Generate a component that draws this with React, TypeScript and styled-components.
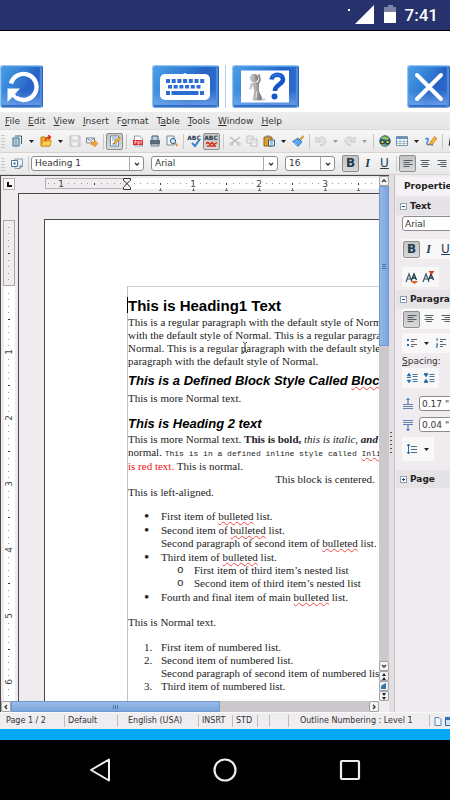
import React from "react";
import styled, { createGlobalStyle, css } from "styled-components";

const ui = '"DejaVu Sans", Verdana, sans-serif';
const INCH = 66;

const Global = createGlobalStyle`
  *, *::before, *::after { box-sizing: border-box; }
  body { margin: 0; background: #000; font-family: ${ui}; font-size: 9px; color: #333; }
  button { border: 0; padding: 0; margin: 0; background: none; font: inherit; color: inherit; }
  svg { display: block; flex: none; }
  ul, ol, p, h1, h2, h3 { margin: 0; padding: 0; list-style: none; font-weight: normal; }
`;

const Screen = styled.div`
  display: flex;
  flex-direction: column;
  min-height: 100vh;
  overflow: hidden;
`;

/* ---------- device bars ---------- */

const DeviceStatus = styled.header`
  display: flex;
  align-items: center;
  justify-content: flex-end;
  height: 31px;
  padding-right: 12px;
  background: #27326c;
  border-bottom: 1px solid #000;
`;

const Clock = styled.time`
  margin-left: 8px;
  font: 500 17px/30px Roboto, sans-serif;
  color: #fff;
`;

const RemoteBar = styled.div`
  display: flex;
  justify-content: space-between;
  padding: 34px 0 4px;
  background: #fff;
`;

const ButtonPair = styled.div`
  display: flex;
  gap: 6px;
`;

const PairDivider = styled.span`
  width: 1px;
  background: #b4cdee;
`;

const GlossButton = styled.button<{ $wide?: boolean }>`
  display: flex;
  align-items: center;
  justify-content: center;
  width: ${(p) => (p.$wide ? 67 : 43)}px;
  height: 43px;
  border: 1px solid #9cc4f0;
  border-right-color: #2b62b4;
  border-bottom-color: #7fa8de;
  border-radius: 3px;
  box-shadow: inset 1px 1px 0 #4f9fe6, inset -2px 0 1px #4d8ee0, inset 0 -2px 1px #2f6cc4;
  background:
    linear-gradient(transparent 60%, #8abcf6aa 100%),
    linear-gradient(120deg, #49a0e6 0%, #2f78d2 45%, #2862c6 60%, #3370d0 100%);
`;

const NavBar = styled.nav`
  display: flex;
  justify-content: center;
  height: 60px;
  background: #000;
  border: 0;
`;

const NavButton = styled.button`
  display: flex;
  align-items: center;
  justify-content: center;
  width: 125px;
`;

const BlueStrip = styled.div`
  height: 11px;
  background: #03a9f4;
`;

/* ---------- office bars ---------- */

const MenuBar = styled.nav`
  display: flex;
  align-items: center;
  gap: 8px;
  height: 18px;
  padding-left: 5px;
  background: linear-gradient(#efeeef, #e6e5e6);
  border-bottom: 1px solid #dcdbdc;
`;

const MenuButton = styled.button`
  line-height: 14px;
  white-space: nowrap;
`;

const Accel = styled.span`
  text-decoration: underline;
  text-underline-offset: 1px;
`;

const ToolBar = styled.div<{ $tall?: boolean }>`
  display: flex;
  align-items: center;
  height: ${(p) => (p.$tall ? 23 : 22)}px;
  overflow: hidden;
  background: linear-gradient(#f7f6f7, #e9e8e9);
  border-bottom: 1px solid #d6d5d6;
`;

const Handle = styled.span`
  flex: 0 0 4px;
  height: 14px;
  margin: 0 3px 0 1px;
  background: radial-gradient(circle, #c8c8c8 1px, transparent 1px) 0 0 / 2px 3px;
`;

const pressed = css`
  background: linear-gradient(#c4c4c4, #d8d8d8);
  border: 1px solid #8e8e8e;
  border-radius: 2px;
`;

const Tool = styled.button<{ $on?: boolean; $dim?: boolean }>`
  display: flex;
  flex: 0 0 17px;
  align-items: center;
  justify-content: center;
  height: 17px;
  opacity: ${(p) => (p.$dim ? 0.4 : 1)};
  ${(p) => p.$on && pressed}
`;

const DropButton = styled.button<{ $dim?: boolean }>`
  display: flex;
  flex: 0 0 12px;
  align-items: center;
  justify-content: center;
  height: 17px;
  opacity: ${(p) => (p.$dim ? 0.4 : 1)};
`;

const Sep = styled.span`
  flex: 0 0 6px;
  height: 15px;
  background: linear-gradient(#c9c8c9, #c9c8c9) center / 1px 100% no-repeat;
`;

const ComboBox = styled.label<{ $w: number }>`
  display: flex;
  flex: 0 0 ${(p) => p.$w}px;
  align-items: center;
  height: 15px;
  margin-right: 7px;
  border: 1px solid #8c8c8c;
  border-radius: 3px;
  background: #fff;
`;

const ComboSelect = styled.select`
  flex: 1;
  min-width: 0;
  height: 13px;
  padding: 0 0 0 3px;
  border: 0;
  appearance: none;
  background: none;
  font: 9px/13px ${ui};
  color: #333;
`;

const ComboArrow = styled.span`
  display: flex;
  align-items: center;
  justify-content: center;
  width: 14px;
  height: 13px;
  border-left: 1px solid #a8a8a8;
`;

const Letter = styled.span<{ $kind: "b" | "i" | "u" }>`
  font: ${(p) => (p.$kind === "b" ? "bold" : p.$kind === "i" ? "italic bold" : "normal")} 12px/15px
    ${(p) => (p.$kind === "i" ? '"Liberation Serif", serif' : ui)};
  color: #1e3c50;
  text-decoration: ${(p) => (p.$kind === "u" ? "underline" : "none")};
`;

/* ---------- work area ---------- */

const WorkArea = styled.main`
  display: flex;
  flex: 1;
  background: #efebee;
`;

const DocumentPane = styled.section`
  display: grid;
  flex: 1;
  min-width: 0;
  grid-template: 17px 1fr 11px / 17px minmax(0, 1fr) 10px;
  border-top: 1px solid #4a4a4a;
  border-left: 1px solid #4a4a4a;
`;

const TabCorner = styled.button`
  display: flex;
  align-items: center;
  justify-content: center;
  width: 12px;
  height: 12px;
  margin: 2px 0 0 2px;
  border: 1px solid #b4b2b4;
  background: #f8f7f8;
`;

const TopRuler = styled.div`
  overflow: hidden;
  padding: 1px 0 0 27px;
`;

const SideRuler = styled.div`
  min-height: 0;
  padding: 27px 0 0 2px;
  overflow: hidden;
`;

const Canvas = styled.div`
  display: flex;
  overflow: hidden;
  border-top: 1px solid #4a4a4a;
  border-left: 1px solid #4a4a4a;
`;

const Sheet = styled.article`
  flex: 0 0 560px;
  margin: 25px 0 0 25px;
  padding: 66px 82px 0;
  border-top: 1px solid #4a4a4a;
  border-left: 1px solid #4a4a4a;
  background: #fff;
  color: #222;
`;

const TextFrame = styled.div`
  position: relative;
  height: 100%;
  border-top: 1px solid #d0d0d0;
  border-left: 1px solid #c4c4c4;
  font: 11px/13px "Liberation Serif", serif;
  white-space: nowrap;
`;

const Caret = styled.span`
  position: absolute;
  left: -1px;
  top: 10px;
  width: 1px;
  height: 16px;
  background: #000;
`;

const HeadingOne = styled.h1`
  padding: 10px 0 2px;
  font: bold 15px/17px "Liberation Sans", sans-serif;
  color: #000;
`;

const HeadingTwo = styled.h2<{ $gap: number }>`
  padding-top: ${(p) => p.$gap}px;
  font: italic bold 13px/15px "Liberation Sans", sans-serif;
  color: #000;
`;

const Para = styled.p<{ $gap?: number; $center?: boolean }>`
  position: relative;
  margin-top: ${(p) => p.$gap ?? 0}px;
  text-align: ${(p) => (p.$center ? "center" : "left")};
`;

const Pointer = styled.span`
  position: absolute;
  left: 114px;
  top: 26px;
`;

const Code = styled.code`
  font: 8px/13px "Liberation Mono", monospace;
`;

const Red = styled.span`
  color: #f01414;
`;

const Misspelt = styled.span`
  text-decoration: underline wavy #f04848 1px;
  text-decoration-skip-ink: none;
  text-underline-offset: 1px;
`;

const listBase = css`
  display: flex;
  flex-direction: column;
  padding-left: 16px;
`;

const Bullets = styled.ul`
  ${listBase}
  gap: 1px;
  margin-top: 11px;
`;

const Nested = styled.ul`
  ${listBase}
`;

const Numbers = styled.ol`
  ${listBase}
  margin-top: 12px;
`;

const Item = styled.li`
  display: grid;
  grid-template-columns: 17px 1fr;
`;

const Marker = styled.span<{ $kind?: "dot" | "ring" }>`
  height: 13px;
  ${(p) => p.$kind === "ring" && 'font-family: "Liberation Mono", monospace;'}
  ${(p) => p.$kind === "dot" && "font-size: 15px;"}
`;

/* ---------- scroll bars ---------- */

const VScroll = styled.div`
  display: flex;
  flex-direction: column;
  grid-row: 1 / 3;
  grid-column: 3;
  background: #cbc9cb;
`;

const HScroll = styled.div`
  display: flex;
  grid-column: 1 / 3;
  background: #cbc9cb;
`;

const ScrollButton = styled.button`
  display: flex;
  flex: 0 0 10px;
  align-items: center;
  justify-content: center;
  min-width: 10px;
  min-height: 10px;
  border: 1px solid #a4a2a4;
  border-radius: 2px;
  background: #f4f3f4;
`;

const VThumb = styled.div`
  display: flex;
  flex: 0 0 160px;
  align-items: center;
  justify-content: center;
  background: linear-gradient(90deg, #94b8e6, #7ba5dc);
  border: 1px solid #6f98cf;
`;

const HThumb = styled.div`
  display: flex;
  flex: 0 1 209px;
  align-items: center;
  justify-content: center;
  background: linear-gradient(#98bbe8, #7ba5dc);
  border: 1px solid #6f98cf;
`;

const Spacer = styled.div`
  flex: 1;
`;

/* ---------- sidebar ---------- */

const Splitter = styled.div`
  display: flex;
  flex: 0 0 6px;
  align-items: center;
  justify-content: center;
  padding-right: 1px;
  background: #e2dfe2;
  border-right: 1px solid #c4c2c4;
`;

const Grip = styled.span`
  width: 2px;
  height: 24px;
  background: repeating-linear-gradient(#555 0 1px, transparent 1px 4px);
`;

const Sidebar = styled.aside`
  flex: 0 0 55px;
  overflow: hidden;
  padding: 2px 0 0 1px;
  white-space: nowrap;
`;

const SideTitle = styled.h2`
  height: 18px;
  padding-left: 8px;
  font: bold 9px/18px ${ui};
  color: #222;
  background: #f5f3f5;
`;

const SectionTitle = styled.h3`
  display: flex;
  align-items: center;
  gap: 3px;
  height: 18px;
  padding-left: 4px;
  margin-top: 2px;
  font: bold 9px/18px ${ui};
  color: #222;
  background: #e5e3e5;
`;

const SectionBody = styled.div<{ $gap: number; $top?: number; $bottom?: number }>`
  display: flex;
  flex-direction: column;
  align-items: flex-start;
  gap: ${(p) => p.$gap}px;
  padding: ${(p) => p.$top ?? 1}px 0 ${(p) => p.$bottom ?? 1}px 6px;
`;

const ToolPanel = styled.div<{ $tall?: boolean }>`
  display: flex;
  align-items: center;
  height: ${(p) => (p.$tall ? 24 : 20)}px;
  padding: 0 2px 0 1px;
  background: #f9f8f9;
`;

const SideField = styled.input`
  width: 90px;
  height: 15px;
  padding: 0 2px;
  border: 1px solid #8c8c8c;
  border-radius: 3px;
  background: #fff;
  font: 9px/13px ${ui};
  color: #333;
`;

const SideLabel = styled.span`
  font: 9px/12px ${ui};
`;

const SpacingRow = styled.label`
  display: flex;
  align-items: center;
  gap: 5px;
  height: 17px;
`;

/* ---------- status ---------- */

const StatusBar = styled.footer`
  display: flex;
  align-items: center;
  height: 17px;
  overflow: hidden;
  background: #f0edf0;
  border-top: 1px solid #fbfafb;
  font: 8px/16px ${ui};
  white-space: nowrap;
`;

const Field = styled.span<{ $w: number; $pad: number }>`
  flex: 0 0 ${(p) => p.$w}px;
  height: 12px;
  padding-left: ${(p) => p.$pad}px;
  line-height: 12px;
  border-right: 1px solid #bcbabc;
`;

const StatusIcons = styled.span`
  display: flex;
  gap: 3px;
  padding-left: 4px;
`;

/* ---------- drawings ---------- */

const Ico = ({ children, s = 12 }: { children: React.ReactNode; s?: number }) => (
  <svg width={s} height={s} viewBox="0 0 12 12" fill="none" aria-hidden="true">
    {children}
  </svg>
);

const Down = () => (
  <svg width="5" height="3" viewBox="0 0 5 3" aria-hidden="true">
    <path d="M0 0h5L2.500 3z" fill="#222" />
  </svg>
);

const Chevron = ({ dir = 0 }: { dir?: number }) => (
  <svg width="6" height="6" viewBox="0 0 6 6" fill="none" aria-hidden="true">
    <path d="M1 2l2 2 2-2" stroke="#333" strokeWidth="1.3" transform={`rotate(${dir} 3 3)`} />
  </svg>
);

const icons = {
  newDoc: (
    <Ico>
      <path d="M4 1h6.500v8" stroke="#34607e" />
      <path d="M2 3h6v8H2z" fill="#dce8f0" stroke="#34607e" />
      <path d="M3.500 5h3M3.500 7h3M3.500 9h3" stroke="#4c7c9c" />
    </Ico>
  ),
  open: (
    <Ico>
      <path d="M1 2h4l1 1h4v8H1z" fill="#f0a828" stroke="#c87c14" />
      <path d="M1 11l2-5h8.500l-2 5z" fill="#fcd050" stroke="#d08c18" strokeWidth=".8" />
      <path d="M5.500 6c0-3 2-4 4-4M8 0l2.500 2L8 4" stroke="#d83018" strokeWidth="1.300" />
    </Ico>
  ),
  save: (
    <Ico>
      <path d="M1 1h10v10H1z" fill="#c8c8c8" stroke="#777" />
      <path d="M3 1h6v4H3zM3 7h6v4H3z" fill="#fff" stroke="#999" strokeWidth=".6" />
    </Ico>
  ),
  mail: (
    <Ico>
      <path d="M.5 3h8v5h-8z" fill="#eef2f6" stroke="#7f8c98" />
      <path d="M.5 3l4 3 4-3" stroke="#7f8c98" />
      <path d="M5.500 7h3V5l3.500 3.500L8.500 12v-2h-3z" fill="#f4a830" stroke="#b8700c" strokeWidth=".5" />
    </Ico>
  ),
  edit: (
    <Ico>
      <path d="M1.500 1h8v10h-8z" fill="#fff" stroke="#6c8aa0" />
      <path d="M3 3h5M3 5h4M3 9h5" stroke="#6c9ac0" />
      <path d="M4.500 9l1-2.500L10 2l1.500 1.500L7 8z" fill="#f4b830" stroke="#a06c10" strokeWidth=".6" />
    </Ico>
  ),
  pdf: (
    <Ico>
      <path d="M2.500 1h5l3 3v7h-8z" fill="#fff" stroke="#8aa0b0" />
      <path d="M1 5h10v5H1z" fill="#dc2c2c" />
      <path d="M3 9V6h1v2M6 6v3h1V6M9 9V6h1" stroke="#fff" strokeWidth=".7" />
    </Ico>
  ),
  print: (
    <Ico>
      <path d="M3 1h6v5H3z" fill="#b4d2ea" stroke="#44586a" />
      <path d="M1 5h10v4H1z" fill="#5a6c7c" />
      <path d="M2 9h8v2H2z" fill="#dfe6ea" stroke="#44586a" strokeWidth=".7" />
    </Ico>
  ),
  preview: (
    <Ico>
      <path d="M1 1h7v9H1z" fill="#f4f8fb" stroke="#6c8aa0" />
      <circle cx="7" cy="6" r="2.600" fill="#cfe6f6" stroke="#34607e" />
      <path d="M9 8l2.500 3" stroke="#d89020" strokeWidth="1.600" />
    </Ico>
  ),
  cut: (
    <Ico>
      <path d="M1 2l8 6M11 2L3 8" stroke="#666" strokeWidth="1.200" />
      <circle cx="2.200" cy="9" r="1.400" stroke="#666" />
      <circle cx="9.800" cy="9" r="1.400" stroke="#666" />
    </Ico>
  ),
  copy: (
    <Ico>
      <path d="M1 1h6v7H1z" fill="#fff" stroke="#777" />
      <path d="M5 4h6v7H5z" fill="#fff" stroke="#777" />
      <path d="M2 3h4M2 5h2M6 6h4M6 8h4" stroke="#888" strokeWidth=".7" />
    </Ico>
  ),
  paste: (
    <Ico>
      <path d="M1 2h8v9H1z" fill="#e0a030" stroke="#94621c" />
      <path d="M3 .500h4v2H3z" fill="#8a8a8a" />
      <path d="M5.500 5h6v6h-6z" fill="#eaf2fa" stroke="#34607e" />
      <path d="M7 7h3M7 9h3" stroke="#34607e" strokeWidth=".7" />
    </Ico>
  ),
  brush: (
    <Ico>
      <path d="M7 5l3.500-4.500 1.300 1.200L8.500 6z" fill="#e8b040" stroke="#a06c10" strokeWidth=".5" />
      <path d="M.5 6.500L6 3l4 4-4 4.500z" fill="#4a9cec" stroke="#1d5c9e" strokeWidth=".6" />
      <path d="M2 7l3 3M4 5.500l3 3" stroke="#b4d8f8" strokeWidth=".7" />
    </Ico>
  ),
  undo: (
    <Ico>
      <path d="M1 2v5h5L4.200 5.200C6 3.800 8.500 4.500 8.500 6.500 8.500 8 7 9.500 5 10.500 8.500 10.500 11 8.500 11 5.800 11 2 6 .8 3 3.800z" fill="#ddd" stroke="#666" strokeWidth=".7" />
    </Ico>
  ),
  redo: (
    <Ico>
      <path d="M11 2v5H6l1.800-1.800C6 3.800 3.500 4.500 3.500 6.500 3.500 8 5 9.500 7 10.500 3.500 10.500 1 8.500 1 5.800 1 2 6 .8 9 3.800z" fill="#ddd" stroke="#666" strokeWidth=".7" />
    </Ico>
  ),
  globe: (
    <Ico>
      <circle cx="6" cy="6" r="5.300" fill="#3c7cb0" stroke="#22506c" strokeWidth=".8" />
      <path d="M2 3c2-2 5-2 8 0L8 5 5 4zM2 9l3 2 4-1" fill="#a4c83c" />
      <path d="M2 5.500h3v3H2zM7 5.500h3v3H7zM5 7h2" fill="#e8d85c" stroke="#263c20" strokeWidth=".9" />
    </Ico>
  ),
  table: (
    <Ico>
      <path d="M.5 1.500h11v9H.5z" fill="#fff" stroke="#7894a8" />
      <path d="M1 2h10v2H1z" fill="#5c92c4" />
      <path d="M1 6.500h10M1 8.500h10M4 2v9M8 2v9" stroke="#8aa2b4" strokeWidth=".7" />
    </Ico>
  ),
  draw: (
    <Ico>
      <path d="M.5 4.500C1 3 4 3 3 5.500S1 9 3 9.500s4-1 5 1" stroke="#3484d4" strokeWidth="1.400" />
      <path d="M5 7.500L9.500 1.500 12 3.500 7.500 9 4.500 10z" fill="#f4b830" stroke="#c05820" strokeWidth=".6" />
    </Ico>
  ),
  find: (
    <Ico>
      <path d="M2 2h3v3h2V2h3l1.500 8.500H7V7H5v3.500H.5z" fill="#333" />
    </Ico>
  ),
  styles: (
    <Ico>
      <path d="M4 1h7.500v7L9 10.500H4z" fill="#e6f0f6" stroke="#8aa2b4" />
      <path d="M.500 2.500h6v6h-6z" fill="#fff" stroke="#4c7894" />
      <path d="M2.500 4.500h2v2h-2z" fill="#34607e" />
      <path d="M9 10.500V8h2.500" stroke="#34607e" strokeWidth=".8" />
    </Ico>
  ),
  left: (
    <Ico>
      <path d="M1.500 2.500h9M1.500 4.500h6M1.500 6.500h9M1.500 8.500h6" stroke="#555f66" />
    </Ico>
  ),
  center: (
    <Ico>
      <path d="M1.500 2.500h9M3 4.500h6M1.500 6.500h9M3 8.500h6" stroke="#555f66" />
    </Ico>
  ),
  right: (
    <Ico>
      <path d="M1.500 2.500h9M4.500 4.500h6M1.500 6.500h9M4.500 8.500h6" stroke="#555f66" />
    </Ico>
  ),
  bullets: (
    <Ico>
      <path d="M1 2h2v2H1zM1 7h2v2H1z" fill="#2c6ca4" />
      <path d="M5 2.500h6M5 4.500h3M5 7.500h6M5 9.500h3" stroke="#666" />
    </Ico>
  ),
  numbering: (
    <Ico>
      <path d="M2 1v3M1 7h2l-2 3h2" stroke="#2c6ca4" />
      <path d="M5 2.500h6M5 4.500h3M5 7.500h6M5 9.500h3" stroke="#666" />
    </Ico>
  ),
  spaceUp: (
    <Ico>
      <path d="M1 4l2-3 2 3zM1 8l2 3 2-3z" fill="#2c6ca4" stroke="#2c6ca4" strokeWidth=".5" />
      <path d="M1 5.500h4M6.500 2.500h5M6.500 4.500h5M6.500 7.500h5M6.500 9.500h5" stroke="#4c7494" />
    </Ico>
  ),
  spaceDown: (
    <Ico>
      <path d="M1 2l2 3 2-3zM1 10l2-3 2 3z" fill="#2c6ca4" stroke="#2c6ca4" strokeWidth=".5" />
      <path d="M1 1.500h4M1 10.500h4M6.500 2.500h5M6.500 4.500h5M6.500 7.500h5M6.500 9.500h5" stroke="#4c7494" />
    </Ico>
  ),
  above: (
    <Ico>
      <path d="M6 0v6M4.500 2L6 .500 7.500 2" stroke="#2c6ca4" />
      <path d="M1 6.500h10M1 8.500h10M1 10.500h10" stroke="#6484b4" strokeWidth="1.200" />
    </Ico>
  ),
  below: (
    <Ico>
      <path d="M6 6v6M4.500 10L6 11.500 7.500 10" stroke="#2c6ca4" />
      <path d="M1 1.500h10M1 3.500h10M1 5.500h10" stroke="#6484b4" strokeWidth="1.200" />
    </Ico>
  ),
  lineGap: (
    <Ico>
      <path d="M2.500 1v10M1 3l1.500-2L4 3M1 9l1.500 2L4 9" stroke="#2c6ca4" />
      <path d="M5 3.500h6M5 6.500h6M5 9.500h6" stroke="#4c6c88" />
    </Ico>
  ),
};

const SpellIcon = ({ auto = false }: { auto?: boolean }) => (
  <svg width="15" height="14" viewBox="0 0 15 14" fill="none" aria-hidden="true">
    <text x="7" y="6" textAnchor="middle" fontFamily="DejaVu Sans" fontWeight="bold" fontSize="6" fill="#1e3c50">
      ABC
    </text>
    {auto ? (
      <path d="M2 9.500l2-1 2 2 2-2 2 2 3-2M3 12h9" stroke="#d8301c" strokeWidth="1.500" />
    ) : (
      <path d="M5 9l3 3 5-7" stroke="#3480cc" strokeWidth="2" />
    )}
  </svg>
);

const SizeIcon = ({ shrink = false }: { shrink?: boolean }) => (
  <svg width="13" height="13" viewBox="0 0 13 13" fill="none" aria-hidden="true">
    <path d="M1 11l3-8 3 8M2 8h4" stroke="#3c5868" strokeWidth="1.200" />
    <path d="M6.500 9l2.500-6 2.500 6M7.500 7h3" stroke="#1e3c50" strokeWidth="1.400" />
    {shrink ? (
      <path d="M6.500 0h6l-3 4z" fill="#e03c20" />
    ) : (
      <path d="M6.500 10h6v1l-3 2-3-2z" fill="#e86428" />
    )}
  </svg>
);

const RefreshArt = () => (
  <svg width="34" height="34" viewBox="0 0 34 34" fill="none" aria-hidden="true">
    <path d="M6 13.500A13 13 0 1 1 11 27.500" stroke="#fff" strokeWidth="4.400" />
    <path d="M2.500 18.500H15l-5 5.500 3.500 5-2 1.500-4-3.500-5 5z" fill="#fff" />
  </svg>
);

const KeyboardArt = () => {
  const keys: React.ReactNode[] = [];
  for (let i = 0; i < 7; i++) keys.push(<rect key={`a${i}`} x={6 + i * 5.7} y="6" width="4" height="4" />);
  for (let i = 0; i < 6; i++) keys.push(<rect key={`b${i}`} x={8 + i * 5.7} y="12" width="4" height="3.500" />);
  return (
    <svg width="50" height="28" viewBox="0 0 50 28" aria-hidden="true">
      <rect x="0" y="1" width="50" height="26" rx="5" fill="#fff" />
      <path d="M23 1l2-1 2 1z" fill="#fff" />
      <g fill="#2a6fd0">
        {keys}
        <rect x="6" y="18" width="4" height="4" />
        <rect x="11.500" y="18" width="27" height="4" />
        <rect x="40" y="18" width="4" height="4" />
      </g>
    </svg>
  );
};

const HelpArt = () => (
  <svg width="48" height="33" viewBox="0 0 48 33" fill="none" aria-hidden="true">
    <defs>
      <linearGradient id="body" x1="0" x2="1">
        <stop offset="0" stopColor="#d0d0d0" />
        <stop offset=".5" stopColor="#b0b0b0" />
        <stop offset="1" stopColor="#6e6e6e" />
      </linearGradient>
    </defs>
    <rect width="48" height="32" y=".500" fill="#fff" />
    <ellipse cx="18" cy="29.500" rx="7" ry="1.500" fill="#ccc" />
    <path d="M10 13l6-1 2 2v7l3 7-1 2h-6l-2-1 1-8-1-6-2 5-2-1z" fill="url(#body)" />
    <path d="M17 14l2-4-1-5" stroke="#888" strokeWidth="1.800" strokeLinejoin="round" strokeLinecap="round" />
    <circle cx="13" cy="8" r="4.300" fill="url(#body)" />
    <path d="M16 21l-1 7" stroke="#e4e4e4" />
    <path d="M30.500 9.500C31 3.500 42 3 42 9.500c0 5-8 5-8 11.500" stroke="#1458c8" strokeWidth="4.600" />
    <circle cx="33.500" cy="26.500" r="3" fill="#1458c8" />
    <path d="M31 7.500C33 4 38 3.500 40 6.500" stroke="#3c84ec" strokeWidth="1.200" />
  </svg>
);

const ticks = Array.from({ length: 50 }, (_, i) => i - 12);

const HorizontalRuler = () => (
  <svg width="520" height="14" fontFamily="DejaVu Sans" fontSize="9" fill="#444" aria-hidden="true">
    <rect x=".500" y="1.500" width="82" height="10" fill="#efebee" stroke="#b4b2b4" />
    <rect x="83" y="1" width="438" height="11" fill="#fff" />
    {ticks.map((t) => {
      const x = Math.round(82 + (t * INCH) / 10);
      if (t % 10 === 0) {
        return t === 0 ? null : (
          <text key={t} x={x} y="10" textAnchor="middle">
            {Math.abs(t / 10)}
          </text>
        );
      }
      return <rect key={t} x={x} y="6" width="1" height={t % 5 ? 1 : 2} fill={t % 5 ? "#999" : "#333"} />;
    })}
    {[1, 2, 3, 4, 5, 6, 7, 8].map((n) => (
      <path key={n} d={`M${82 + n * 33}.500 11v2m-1.500 .500h3`} stroke="#777" fill="none" />
    ))}
    <path d="M78.500 1.500h7v2l-3.500 3-3.500-3zM78.500 12.500h7v-2l-3.500-4-3.500 4z" fill="#f4f4f4" stroke="#333" />
  </svg>
);

const VerticalRuler = () => (
  <svg width="12" height="100%" fontFamily="DejaVu Sans" fontSize="9" fill="#444" aria-hidden="true">
    <rect x="1" y="66" width="11" height="100%" fill="#fff" />
    <rect x=".500" y=".500" width="11" height="65" fill="#efebee" stroke="#a8a6a8" />
    {Array.from({ length: 72 }, (_, i) => i - 9).map((t) => {
      const y = Math.round(66 + (t * INCH) / 10);
      if (t % 10 === 0) {
        return t === 0 ? null : (
          <text key={t} textAnchor="middle" transform={`translate(9 ${y}) rotate(-90)`}>
            {t / 10}
          </text>
        );
      }
      return <rect key={t} x="5" y={y} width={t % 5 ? 1 : 2} height="1" fill={t % 5 ? "#999" : "#333"} />;
    })}
  </svg>
);

const Toggle = ({ plus = false }: { plus?: boolean }) => (
  <svg width="7" height="7" viewBox="0 0 7 7" fill="none" aria-hidden="true">
    <rect x=".5" y=".5" width="6" height="6" fill="#fff" stroke="#8ca0b4" />
    <path d={plus ? "M2 3.500h3M3.500 2v3" : "M2 3.500h3"} stroke="#234a78" />
  </svg>
);

/* ---------- assembled parts ---------- */

const menus: [string, string, string][] = [
  ["", "F", "ile"],
  ["", "E", "dit"],
  ["", "V", "iew"],
  ["", "I", "nsert"],
  ["F", "o", "rmat"],
  ["T", "a", "ble"],
  ["", "T", "ools"],
  ["", "W", "indow"],
  ["", "H", "elp"],
];

const Drop = ({ dim = false, label }: { dim?: boolean; label: string }) => (
  <DropButton $dim={dim} aria-label={label}>
    <Down />
  </DropButton>
);

const Combo = ({ label, value, width }: { label: string; value: string; width: number }) => (
  <ComboBox $w={width}>
    <ComboSelect aria-label={label} defaultValue={value}>
      <option>{value}</option>
    </ComboSelect>
    <ComboArrow>
      <Chevron />
    </ComboArrow>
  </ComboBox>
);

const Bad = () => <Misspelt>bulleted</Misspelt>;

export default function App() {
  return (
    <Screen>
      <Global />
      <DeviceStatus>
        <svg width="50" height="20" viewBox="0 0 50 20" aria-hidden="true">
          <rect x="1" y="4" width="2" height="2" fill="#fff" />
          <path d="M8 19H27V0z" fill="#fff" />
          <path d="M41 0h5v2h3v5H37V2h4z" fill="#7d84a6" />
          <path d="M37 7h12v11H37z" fill="#fff" />
        </svg>
        <Clock>7:41</Clock>
      </DeviceStatus>

      <RemoteBar>
        <GlossButton aria-label="Refresh">
          <RefreshArt />
        </GlossButton>
        <ButtonPair>
          <GlossButton $wide aria-label="Keyboard">
            <KeyboardArt />
          </GlossButton>
          <PairDivider />
          <GlossButton $wide aria-label="Help">
            <HelpArt />
          </GlossButton>
        </ButtonPair>
        <GlossButton aria-label="Close">
          <svg width="30" height="30" viewBox="0 0 30 30" aria-hidden="true">
            <path d="M3 3l24 24M27 3L3 27" stroke="#fff" strokeWidth="4" strokeLinecap="round" />
          </svg>
        </GlossButton>
      </RemoteBar>

      <MenuBar>
        {menus.map(([before, key, after]) => (
          <MenuButton key={before + key + after}>
            {before}
            <Accel>{key}</Accel>
            {after}
          </MenuButton>
        ))}
      </MenuBar>

      <ToolBar $tall>
        <Handle />
        <Tool aria-label="New">{icons.newDoc}</Tool>
        <Drop label="New options" />
        <Tool aria-label="Open">{icons.open}</Tool>
        <Drop label="Open options" />
        <Tool aria-label="Save" $dim>{icons.save}</Tool>
        <Tool aria-label="E-mail">{icons.mail}</Tool>
        <Sep />
        <Tool aria-label="Edit file" $on>{icons.edit}</Tool>
        <Sep />
        <Tool aria-label="Export as PDF">{icons.pdf}</Tool>
        <Tool aria-label="Print">{icons.print}</Tool>
        <Tool aria-label="Page preview">{icons.preview}</Tool>
        <Sep />
        <Tool aria-label="Spelling"><SpellIcon /></Tool>
        <Tool aria-label="Automatic spelling" $on><SpellIcon auto /></Tool>
        <Sep />
        <Tool aria-label="Cut" $dim>{icons.cut}</Tool>
        <Tool aria-label="Copy" $dim>{icons.copy}</Tool>
        <Tool aria-label="Paste">{icons.paste}</Tool>
        <Drop label="Paste options" />
        <Tool aria-label="Clone formatting">{icons.brush}</Tool>
        <Sep />
        <Tool aria-label="Undo" $dim>{icons.undo}</Tool>
        <Drop dim label="Undo steps" />
        <Tool aria-label="Redo" $dim>{icons.redo}</Tool>
        <Drop dim label="Redo steps" />
        <Sep />
        <Tool aria-label="Hyperlink">{icons.globe}</Tool>
        <Tool aria-label="Table">{icons.table}</Tool>
        <Drop label="Table size" />
        <Tool aria-label="Draw functions">{icons.draw}</Tool>
        <Sep />
        <Tool aria-label="Find">{icons.find}</Tool>
      </ToolBar>

      <ToolBar>
        <Handle />
        <Tool aria-label="Styles">{icons.styles}</Tool>
        <Sep />
        <Combo label="Paragraph style" value="Heading 1" width={113} />
        <Combo label="Font name" value="Arial" width={127} />
        <Combo label="Font size" value="16" width={50} />
        <Tool aria-label="Bold" $on><Letter $kind="b">B</Letter></Tool>
        <Tool aria-label="Italic"><Letter $kind="i">I</Letter></Tool>
        <Tool aria-label="Underline"><Letter $kind="u">U</Letter></Tool>
        <Sep />
        <Tool aria-label="Align left" $on>{icons.left}</Tool>
        <Tool aria-label="Align center">{icons.center}</Tool>
        <Tool aria-label="Align right">{icons.right}</Tool>
      </ToolBar>

      <WorkArea>
        <DocumentPane>
          <TabCorner aria-label="Tab type">
            <svg width="5" height="5" viewBox="0 0 5 5" fill="none" aria-hidden="true">
              <path d="M1 0v4h4" stroke="#111" strokeWidth="2" />
            </svg>
          </TabCorner>
          <TopRuler>
            <HorizontalRuler />
          </TopRuler>
          <VScroll>
            <ScrollButton aria-label="Scroll up"><Chevron dir={180} /></ScrollButton>
            <VThumb>
              <svg width="4" height="5" viewBox="0 0 4 5" aria-hidden="true">
                <path d="M0 .5h4M0 2.500h4M0 4.500h4" stroke="#5078ac" />
              </svg>
            </VThumb>
            <Spacer />
            <ScrollButton aria-label="Scroll down"><Chevron /></ScrollButton>
            <ScrollButton aria-label="Previous page">
              <svg width="6" height="7" viewBox="0 0 6 7" aria-hidden="true">
                <path d="M1 3l2-3 2 3zM1 7l2-3 2 3z" fill="#222" />
              </svg>
            </ScrollButton>
            <ScrollButton aria-label="Navigation">
              <svg width="6" height="6" viewBox="0 0 6 6" aria-hidden="true">
                <path d="M0 6V3l3-2 2-1v6z" fill="#2f78a8" />
              </svg>
            </ScrollButton>
            <ScrollButton aria-label="Next page">
              <svg width="6" height="7" viewBox="0 0 6 7" aria-hidden="true">
                <path d="M1 0h4L3 3zM1 4h4L3 7z" fill="#222" />
              </svg>
            </ScrollButton>
          </VScroll>
          <SideRuler>
            <VerticalRuler />
          </SideRuler>
          <Canvas>
            <Sheet>
              <TextFrame>
                <Caret />
                <HeadingOne>This is Heading1 Text</HeadingOne>
                <Para>
                  This is a regular paragraph with the default style of Normal.
                  <br />
                  with the default style of Normal. This is a regular paragraph
                  <br />
                  Normal. This is a regular paragraph with the default style
                  <br />
                  paragraph with the default style of Normal.
                  <Pointer>
                    <svg width="6" height="11" viewBox="0 0 6 11" fill="none" aria-hidden="true">
                      <path d="M1 .5h1l1 1 1-1h1M3 1v9M1 10.500h1l1-1 1 1h1" stroke="#444" />
                    </svg>
                  </Pointer>
                </Para>
                <HeadingTwo $gap={5}>
                  This is a Defined Block Style Called <Misspelt>Block</Misspelt>
                </HeadingTwo>
                <Para $gap={4}>This is more Normal text.</Para>
                <HeadingTwo $gap={11}>This is Heading 2 text</HeadingTwo>
                <Para $gap={2}>
                  This is more Normal text. <b>This is bold,</b> <i>this is italic</i>,{" "}
                  <b>
                    <i>and</i>
                  </b>
                  <br />
                  normal.{" "}
                  <Code>
                    This is in a defined inline style called <Misspelt>Inline</Misspelt>
                  </Code>
                  <br />
                  <Red>is red text.</Red> This is normal.
                </Para>
                <Para $center>This block is centered.</Para>
                <Para>This is left-aligned.</Para>
                <Bullets>
                  <Item>
                    <Marker $kind="dot">•</Marker>
                    <span>First item of <Bad /> list.</span>
                  </Item>
                  <Item>
                    <Marker $kind="dot">•</Marker>
                    <span>
                      Second item of <Bad /> list.
                      <br />
                      Second paragraph of second item of <Bad /> list.
                    </span>
                  </Item>
                  <Item>
                    <Marker $kind="dot">•</Marker>
                    <div>
                      Third item of <Bad /> list.
                      <Nested>
                        <Item>
                          <Marker $kind="ring">o</Marker>
                          <span>First item of third item’s nested list</span>
                        </Item>
                        <Item>
                          <Marker $kind="ring">o</Marker>
                          <span>Second item of third item’s nested list</span>
                        </Item>
                      </Nested>
                    </div>
                  </Item>
                  <Item>
                    <Marker $kind="dot">•</Marker>
                    <span>Fourth and final item of main <Bad /> list.</span>
                  </Item>
                </Bullets>
                <Para $gap={12}>This is Normal text.</Para>
                <Numbers>
                  <Item>
                    <Marker>1.</Marker>
                    <span>First item of numbered list.</span>
                  </Item>
                  <Item>
                    <Marker>2.</Marker>
                    <span>
                      Second item of numbered list.
                      <br />
                      Second paragraph of second item of numbered list.
                    </span>
                  </Item>
                  <Item>
                    <Marker>3.</Marker>
                    <span>Third item of numbered list.</span>
                  </Item>
                </Numbers>
              </TextFrame>
            </Sheet>
          </Canvas>
          <HScroll>
            <ScrollButton aria-label="Scroll left"><Chevron dir={90} /></ScrollButton>
            <HThumb>
              <svg width="5" height="4" viewBox="0 0 5 4" aria-hidden="true">
                <path d="M.5 0v4M2.500 0v4M4.500 0v4" stroke="#5078ac" />
              </svg>
            </HThumb>
            <Spacer />
            <ScrollButton aria-label="Scroll right"><Chevron dir={-90} /></ScrollButton>
          </HScroll>
        </DocumentPane>

        <Splitter>
          <Grip />
        </Splitter>

        <Sidebar>
          <SideTitle>Properties</SideTitle>
          <SectionTitle>
            <Toggle /> Text
          </SectionTitle>
          <SectionBody $gap={8}>
            <SideField aria-label="Font" defaultValue="Arial" />
            <ToolPanel>
              <Tool aria-label="Bold" $on><Letter $kind="b">B</Letter></Tool>
              <Tool aria-label="Italic"><Letter $kind="i">I</Letter></Tool>
              <Tool aria-label="Underline"><Letter $kind="u">U</Letter></Tool>
            </ToolPanel>
            <ToolPanel>
              <Tool aria-label="Increase size"><SizeIcon /></Tool>
              <Tool aria-label="Decrease size"><SizeIcon shrink /></Tool>
            </ToolPanel>
          </SectionBody>
          <SectionTitle>
            <Toggle /> Paragraph
          </SectionTitle>
          <SectionBody $gap={4}>
            <ToolPanel>
              <Tool aria-label="Align left" $on>{icons.left}</Tool>
              <Tool aria-label="Align center">{icons.center}</Tool>
              <Tool aria-label="Align right">{icons.right}</Tool>
            </ToolPanel>
            <ToolPanel>
              <Tool aria-label="Bullets">{icons.bullets}</Tool>
              <Drop label="Bullet styles" />
              <Tool aria-label="Numbering">{icons.numbering}</Tool>
            </ToolPanel>
          </SectionBody>
          <SectionBody $gap={1}>
            <SideLabel>
              <Accel>S</Accel>pacing:
            </SideLabel>
            <ToolPanel>
              <Tool aria-label="Increase spacing">{icons.spaceUp}</Tool>
              <Tool aria-label="Decrease spacing">{icons.spaceDown}</Tool>
            </ToolPanel>
          </SectionBody>
          <SectionBody $gap={4} $top={6} $bottom={7}>
            <SpacingRow>
              {icons.above}
              <SideField aria-label="Above paragraph" defaultValue={'0.17 "'} />
            </SpacingRow>
            <SpacingRow>
              {icons.below}
              <SideField aria-label="Below paragraph" defaultValue={'0.04 "'} />
            </SpacingRow>
            <ToolPanel $tall>
              <Tool aria-label="Line spacing">{icons.lineGap}</Tool>
              <Drop label="Line spacing options" />
            </ToolPanel>
          </SectionBody>
          <SectionTitle>
            <Toggle plus /> Page
          </SectionTitle>
        </Sidebar>
      </WorkArea>

      <StatusBar>
        <Field $w={65} $pad={6}>Page 1 / 2</Field>
        <Field $w={53} $pad={3}>Default</Field>
        <Field $w={81} $pad={10}>English (USA)</Field>
        <Field $w={34} $pad={3}>INSRT</Field>
        <Field $w={25} $pad={3}>STD</Field>
        <Field $w={12} $pad={0} />
        <Field $w={19} $pad={0} />
        <Field $w={141} $pad={11}>Outline Numbering : Level 1</Field>
        <StatusIcons>
          <svg width="8" height="9" viewBox="0 0 8 9" aria-hidden="true">
            <path d="M1 .5h4l2 2v6H1z" fill="#eef6fc" stroke="#6088a8" />
          </svg>
          <svg width="12" height="9" viewBox="0 0 12 9" aria-hidden="true">
            <path d="M.5.5h5v8h-5zM6.500.5h5v8h-5z" fill="#cfe2f6" stroke="#2c62b0" />
            <path d="M1 1h10v2H1z" fill="#3c74c4" />
          </svg>
        </StatusIcons>
      </StatusBar>
      <BlueStrip />

      <NavBar>
        <NavButton aria-label="Back">
          <svg width="22" height="24" viewBox="0 0 22 24" fill="none" aria-hidden="true">
            <path d="M2 12L20 1.500V22.500z" stroke="#eee" strokeWidth="2" strokeLinejoin="round" />
          </svg>
        </NavButton>
        <NavButton aria-label="Home">
          <svg width="24" height="24" viewBox="0 0 24 24" fill="none" aria-hidden="true">
            <circle cx="12" cy="12" r="10.500" stroke="#eee" strokeWidth="2.200" />
          </svg>
        </NavButton>
        <NavButton aria-label="Recent apps">
          <svg width="22" height="22" viewBox="0 0 22 22" fill="none" aria-hidden="true">
            <rect x="2" y="2" width="18" height="18" rx="1" stroke="#eee" strokeWidth="2.200" />
          </svg>
        </NavButton>
      </NavBar>
    </Screen>
  );
}
